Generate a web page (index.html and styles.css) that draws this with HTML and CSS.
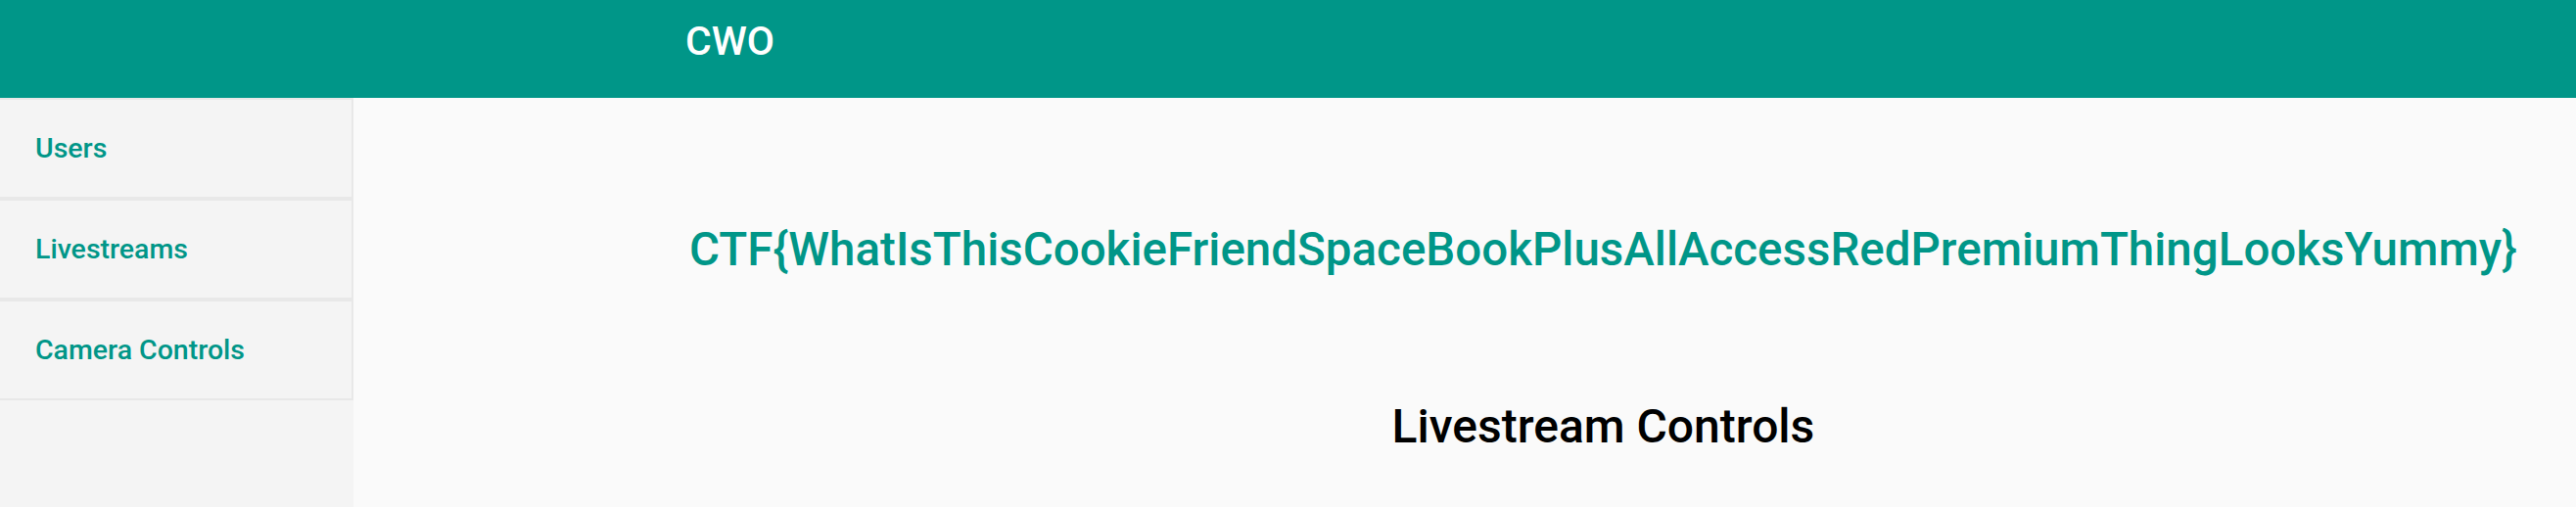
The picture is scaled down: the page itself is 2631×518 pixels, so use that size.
FILE: index.html
```html
<!DOCTYPE html>
<html>
<head>
<meta charset="utf-8">
<link rel="stylesheet" href="styles.css">
</head>
<body>
<header class="topbar">
  <span class="brand">CWO</span>
</header>
<div class="layout">
  <nav class="sidebar">
    <a class="nav-item" href="#">Users</a>
    <a class="nav-item" href="#">Livestreams</a>
    <a class="nav-item" href="#">Camera Controls</a>
  </nav>
  <main class="main">
    <div class="content">
      <h1 class="flag">CTF{WhatIsThisCookieFriendSpaceBookPlusAllAccessRedPremiumThingLooksYummy}</h1>
      <h2 class="section-title">Livestream Controls</h2>
    </div>
  </main>
</div>
</body>
</html>
```

FILE: styles.css
```css
html, body {
  margin: 0;
  padding: 0;
  height: 100%;
}
body {
  font-family: Roboto, "Liberation Sans", sans-serif;
  background: #fafafa;
  overflow: hidden;
}
.topbar {
  height: 100px;
  box-sizing: border-box;
  background: #009688;
  padding: 22px 0 0 700px;
}
.brand {
  display: block;
  color: #ffffff;
  font-size: 41px;
  line-height: 41px;
  font-weight: 500;
}
.layout {
  display: flex;
  height: 418px;
}
.sidebar {
  width: 361px;
  flex: 0 0 361px;
  background: #f4f4f4;
  display: flex;
  flex-direction: column;
}
.nav-item {
  display: flex;
  align-items: center;
  height: 103px;
  box-sizing: border-box;
  border: 2px solid #e8e8e8;
  border-left: none;
  padding-left: 36px;
  color: #009688;
  font-size: 28.5px;
  font-weight: 500;
  text-decoration: none;
}
.main {
  flex: 1;
  background: #fafafa;
  padding: 127px 0 0 343px;
}
.content {
  display: inline-block;
}
.flag {
  margin: 0;
  color: #009688;
  font-size: 47.5px;
  line-height: 56px;
  font-weight: 500;
  white-space: nowrap;
}
.section-title {
  margin: 125px 0 0;
  text-align: center;
  color: #000000;
  font-size: 48px;
  line-height: 56px;
  font-weight: 500;
}
```
